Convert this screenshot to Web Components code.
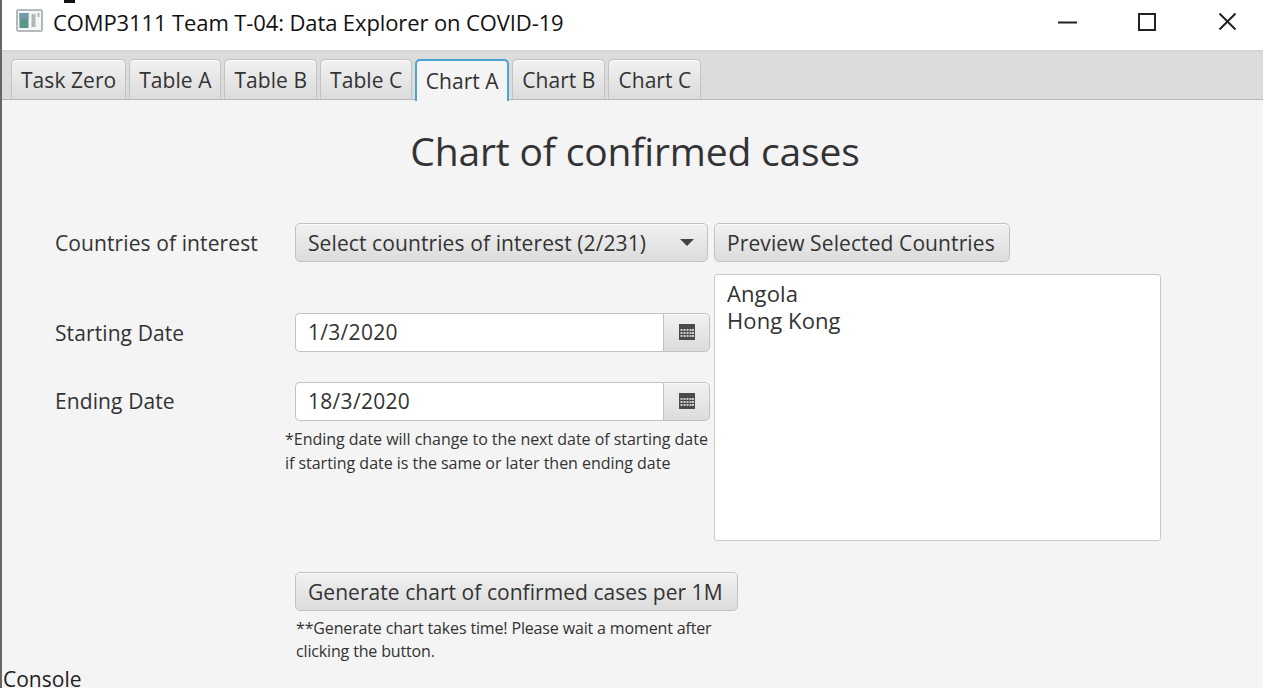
<!DOCTYPE html>
<html><head><meta charset="utf-8"><style>
html,body{margin:0;padding:0;background:#fff;overflow:hidden}
body{font-family:"Open Sans","Noto Sans",sans-serif;color:#333}
</style></head><body>
<app-window>
<title-bar slot="title" text="COMP3111 Team T-04: Data Explorer on COVID-19"></title-bar>
<tab-strip slot="tabs">
<tab-item>Task Zero</tab-item><tab-item>Table A</tab-item><tab-item>Table B</tab-item><tab-item>Table C</tab-item><tab-item selected>Chart A</tab-item><tab-item>Chart B</tab-item><tab-item>Chart C</tab-item>
</tab-strip>
<chart-form></chart-form>
<console-label slot="footer">Console</console-label>
</app-window>
<script>
function def(name,html,init){customElements.define(name,class extends HTMLElement{constructor(){super();const s=this.attachShadow({mode:'open'});s.innerHTML=html;if(init)init(this,s);}});}
const face='background:linear-gradient(#f1f1f1,#dcdcdc);border:1.5px solid #c2c2c2;border-radius:5px;box-sizing:border-box;box-shadow:inset 0 1px 0 #fafafa;';
const font='font-family:"Open Sans","Noto Sans",sans-serif;font-size:21px;letter-spacing:.1px;color:#333;';
def('app-window',`<style>:host{display:flex;flex-direction:column;width:1263px;height:688px;background:#f4f4f4;box-sizing:border-box;border-left:2px solid #666;overflow:hidden;position:relative}
.mark{position:absolute;left:62px;top:0;width:11px;height:2.5px;background:#111}</style><slot name="title"></slot><slot name="tabs"></slot><slot></slot><slot name="footer"></slot><div class="mark"></div>`);
def('title-bar',`<style>:host{display:flex;align-items:center;height:50px;flex:none;background:#fff;padding:0 0 6px 14px;box-sizing:border-box}
.i{width:27px;height:23px;flex:none;margin:0 10px 3px 0}
.t{font-family:"Open Sans","Noto Sans",sans-serif;font-size:22px;letter-spacing:-.11px;color:#111;flex:1;white-space:nowrap}
.b{display:flex;margin-right:-6px}
.b svg{width:80px;height:24px;display:block}
</style>
<svg class="i" viewBox="0 0 27 23"><rect x="1" y="1" width="25" height="21" fill="#f4f6f6" stroke="#b4babc" stroke-width="2" rx="1.5"/><rect x="3.5" y="4" width="9" height="15" fill="#5c9688"/><rect x="3.5" y="4" width="9" height="6" fill="#7497ab"/><rect x="15.5" y="5" width="4" height="13" fill="#b0b7ba"/><rect x="21.5" y="4" width="2" height="4" fill="#a9b8bd"/></svg>
<span class="t"></span>
<div class="b"><svg viewBox="0 0 80 24"><path d="M29 12.5H48" stroke="#222" stroke-width="2" fill="none"/></svg><svg viewBox="0 0 80 24"><rect x="30" y="4" width="16" height="16" fill="none" stroke="#222" stroke-width="2"/></svg><svg viewBox="0 0 80 24"><path d="M30.5 3.5L46.5 19.5M46.5 3.5L30.5 19.5" stroke="#222" stroke-width="2" fill="none"/></svg></div>`,
(h,s)=>{s.querySelector('.t').textContent=h.getAttribute('text')});
def('tab-strip',`<style>:host{display:flex;align-items:flex-end;gap:3px;flex:none;height:50px;box-sizing:border-box;padding-left:9px;background:linear-gradient(#d2d2d2 0,#dcdcdc 3px,#dcdcdc 100%);border-bottom:1.5px solid #b8b8b8}</style><slot></slot>`);
def('tab-item',`<style>:host{display:block;height:40px;box-sizing:border-box;padding:0 9px;line-height:41px;${font}letter-spacing:.05px;${face}border-bottom:none;border-radius:5px 5px 0 0;white-space:nowrap}
:host([selected]){background:#f4f4f4;border:2px solid #4da3d1;border-bottom:none;margin-bottom:-1.5px;height:41.5px;padding:0 8.5px;box-shadow:none}</style><slot></slot>`);
def('ui-label',`<style>:host{display:block;${font}white-space:nowrap}</style><slot></slot>`);
def('ui-button',`<style>:host{display:inline-flex;align-items:center;height:39px;padding:0 14px 0 12px;${font}${face}white-space:nowrap}</style><slot></slot>`);
def('ui-combo',`<style>:host{display:flex;align-items:center;justify-content:space-between;width:413px;height:39px;padding:0 13px 0 12px;${font}${face}white-space:nowrap}
i{width:0;height:0;border:7px solid transparent;border-top:7px solid #444;border-bottom:0}</style><slot></slot><i></i>`);
def('date-picker',`<style>:host{display:flex;width:415px;height:39px;box-sizing:border-box;${font}letter-spacing:.3px}
.f{flex:1;background:#fff;border:1.5px solid #c2c2c2;border-right:none;border-radius:5px 0 0 5px;box-sizing:border-box;padding:0 12px;line-height:36px}
.c{width:47px;${face}border-radius:0 5px 5px 0;display:flex;align-items:center;justify-content:center;padding-bottom:2px}
svg{width:16px;height:16px;display:block}</style>
<div class="f"><slot></slot></div><div class="c"><svg viewBox="0 0 16 16"><path fill="#4a4a4a" d="M0 0H16V16H0Z"/><path fill="#ccc" d="M1.5 5H3.5V7H1.5ZM4.5 5H6.5V7H4.5ZM7.5 5H9.5V7H7.5ZM10.5 5H12.5V7H10.5ZM13 5H15V7H13ZM1.5 8H3.5V10H1.5ZM4.5 8H6.5V10H4.5ZM7.5 8H9.5V10H7.5ZM10.5 8H12.5V10H10.5ZM13 8H15V10H13ZM1.5 11H3.5V13H1.5ZM4.5 11H6.5V13H4.5ZM7.5 11H9.5V13H7.5ZM10.5 11H12.5V13H10.5ZM13 11H15V13H13Z"/></svg></div>`);
def('list-box',`<style>:host{display:block;width:447px;height:267px;box-sizing:border-box;background:#fff;border:1.5px solid #c8c8c8;border-radius:3px;padding:5px 12px;${font}font-size:22px;line-height:27px}
div{white-space:nowrap}</style><div>Angola</div><div>Hong Kong</div>`);
def('note-text',`<style>:host{display:block;font-family:"Open Sans","Noto Sans",sans-serif;font-size:16px;letter-spacing:-.03px;color:#333;white-space:nowrap;line-height:24px}
:host([tight]){letter-spacing:-.15px;line-height:23.5px;padding-left:1px}</style><slot></slot>`);
def('console-label',`<style>:host{display:block;flex:none;font-family:"Open Sans","Noto Sans",sans-serif;font-size:21px;color:#222;line-height:19px;margin-top:auto;height:18px;padding-left:1px}</style><slot></slot>`);
def('chart-form',`<style>:host{display:block;flex:none;box-sizing:border-box;padding-left:53px;${font}}
h1{margin:0 0 0 -53px;height:123px;box-sizing:border-box;padding:22px 0 0 5px;font-weight:400;font-size:39px;letter-spacing:-.16px;line-height:58px;text-align:center;width:1261px;color:#333}
.row{display:flex;align-items:center}
.lab{width:240px;flex:none}
.gap{width:6px;flex:none}
.main{display:flex;margin-top:12px}
.left{width:659px;flex:none}
.l{display:flex;align-items:center}
.s1{margin-top:39px}.s2{margin-top:30px}
.up{padding-bottom:2px}
.note{margin:6px 0 0 230px}
.gen{display:flex;margin:31px 0 0 240px;flex-direction:column;align-items:flex-start}
.gb{letter-spacing:.05px}
.gn{margin-top:5.5px}
</style>
<h1>Chart of confirmed cases</h1>
<div class="row"><ui-label class="lab">Countries of interest</ui-label><ui-combo>Select countries of interest (2/231)</ui-combo><div class="gap"></div><ui-button>Preview Selected Countries</ui-button></div>
<div class="main">
<div class="left">
<div class="l s1"><ui-label class="lab">Starting Date</ui-label><date-picker>1/3/2020</date-picker></div>
<div class="l s2"><ui-label class="lab up">Ending Date</ui-label><date-picker>18/3/2020</date-picker></div>
<div class="note"><note-text>*Ending date will change to the next date of starting date</note-text><note-text>if starting date is the same or later then ending date</note-text></div>
</div>
<list-box></list-box>
</div>
<div class="gen"><ui-button class="gb">Generate chart of confirmed cases per 1M</ui-button><div class="gn"><note-text tight>**Generate chart takes time! Please wait a moment after</note-text><note-text tight>clicking the button.</note-text></div></div>`);
</script>
</body></html>
